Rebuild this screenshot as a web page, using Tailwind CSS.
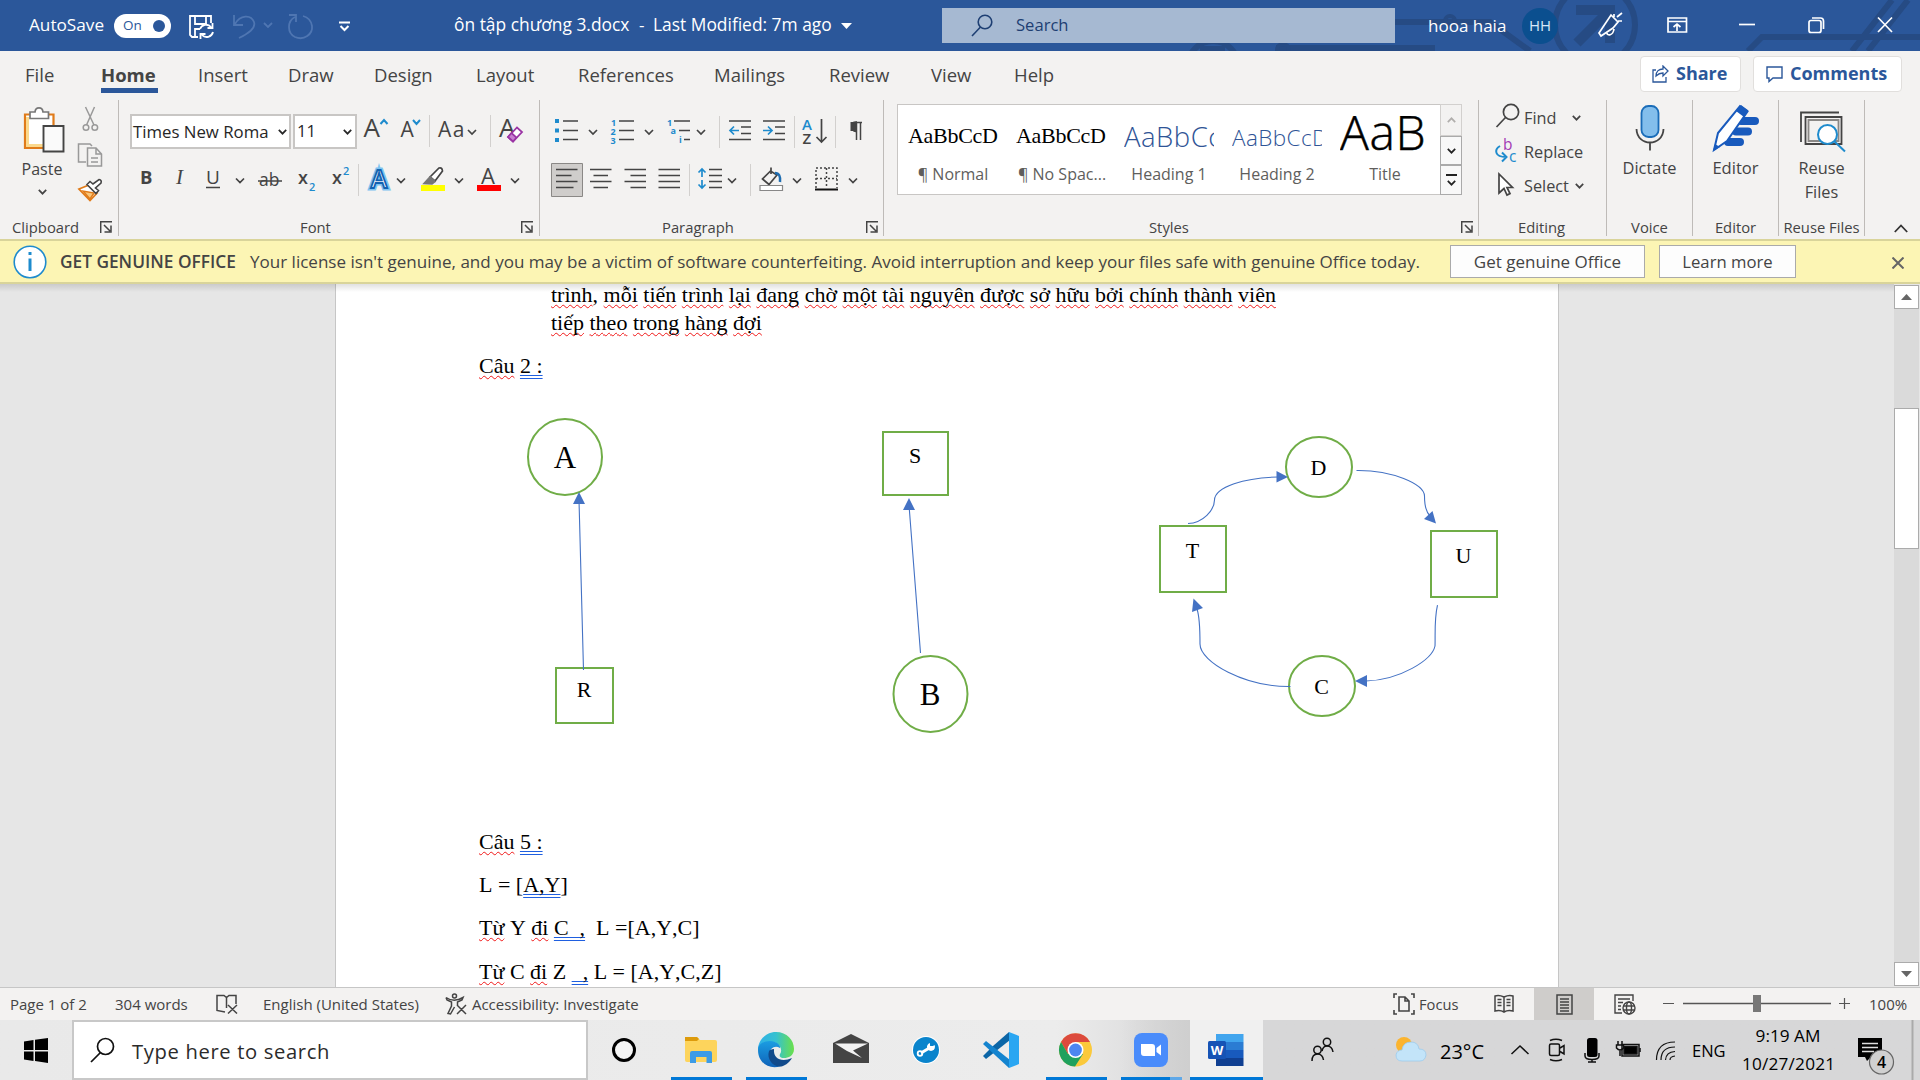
<!DOCTYPE html>
<html lang="vi">
<head>
<meta charset="utf-8">
<title>ôn tập chương 3.docx - Word</title>
<script src="https://cdn.jsdelivr.net/npm/@tailwindcss/browser@4"></script>
</head>
<body class="w-[1920px] h-[1080px] overflow-hidden bg-[#e6e6e6] font-['Open_Sans',sans-serif] text-[#444] whitespace-nowrap">
<svg class="hidden">
  <symbol id="chev" viewBox="0 0 9 6"><path d="M.8 .9L4.5 4.7L8.2 .9" fill="none" stroke="currentColor" stroke-width="1.7"/></symbol>
  <symbol id="launch" viewBox="0 0 12 12"><path d="M.7 12V.7H12M4 4L10 10M11 4.500V11H4.500" fill="none" stroke="#444" stroke-width="1.5"/></symbol>
</svg>
<div class="flex flex-col h-full">

<!-- title bar -->
<header class="h-[51px] shrink-0 bg-[#2b579a] text-white grid text-[17px]">
  <svg class="col-start-1 row-start-1 w-[1920px] h-[51px]" viewBox="0 0 1920 51" fill="none" stroke="#264b84" stroke-width="6">
    <path d="M1395 22H1490L1530 51M1276 48H1435M1748 51L1762 37H1920M1852 51L1892 0M1868 51L1908 0"/>
    <circle cx="1450" cy="21" r="5" stroke-width="4"/><circle cx="1283" cy="50" r="6" stroke-width="4"/>
    <circle cx="1595" cy="25" r="40"/><path d="M1576 10H1610V43M1608 12L1577 43" stroke-width="10"/>
    <circle cx="1213" cy="66" r="25"/><path d="M1200 49H1225"/>
  </svg>
  <div class="col-start-1 row-start-1 flex items-center">
    <span class="ml-[29px] w-[85px] text-[17.2px] leading-none pb-px">AutoSave</span>
    <span class="w-[57px] h-[24px] rounded-full bg-white text-[#2b579a] text-[13.5px] flex items-center justify-between pl-[9px] pr-[6px]">On<i class="size-3 rounded-full bg-[#2b579a]"></i></span>
    <svg class="w-[180px] h-[51px]" viewBox="171 0 180 51" fill="none" stroke="#fff" stroke-width="1.8">
      <path d="M198 37H192L190 35V16H211V23M195 16V24H206V16M195 37V29H200"/>
      <path d="M200 29A6.500 6.500 0 0 1 211 27M212.500 23V28H207.500M213 32A6.500 6.500 0 0 1 202 35M200.500 39V34H205.500"/>
      <g stroke="#4f76b2"><path d="M234 15V25H243M235 24C240 15 251 14 254 22C256 28 250 33 239 38"/><path d="M264 23L268 27L272 23"/><path d="M289 15H296V22M295 17C287 21 287 33 295 37C304 41 313 34 312 26C311 20 307 17 303 16"/></g>
      <path d="M339 22.500H350M340.500 26L344.500 30L348.500 26" stroke-width="2"/>
    </svg>
    <span class="ml-[103px] w-[185px] text-[17.4px] pb-[2px]">ôn tập chương 3.docx</span>
    <span class="w-[14px] pb-px">-</span>
    <span class="w-[188px] text-[17.4px] pb-[2px]">Last Modified: 7m ago</span>
    <svg class="w-[11px] h-[6px]" viewBox="0 0 11 6"><path d="M0 0H11L5.500 6Z" fill="#fff"/></svg>
    <div class="ml-[90px] w-[453px] h-[35px] bg-[#a6b9d2] flex items-center text-[#1e3f73]">
      <svg class="ml-[29px] w-[22px] h-[24px]" viewBox="0 0 22 24" fill="none" stroke="#1e3f73" stroke-width="1.6"><circle cx="14" cy="8" r="6.800"/><path d="M9.500 13L1 22"/></svg>
      <span class="ml-[23px] text-[16.6px]">Search</span>
    </div>
    <span class="ml-[33px] w-[94px] text-[17px]">hooa haia</span>
    <span class="size-9 rounded-full bg-[#0b4f8f] text-[15px] text-[#d8e8f8] flex items-center justify-center">HH</span>
    <svg class="w-[362px] h-[51px]" viewBox="1558 0 362 51" fill="none" stroke="#fff" stroke-width="1.7">
      <path d="M1611 15L1618 22L1613 28L1601 36L1599 33ZM1607 33C1607 36 1613 36 1614 29M1614 14V17M1617 17L1622 13M1618 21H1622"/>
      <path d="M1668 18H1686.500V32H1668ZM1668 21.500H1686.500M1677 31V24M1673.500 27L1677 24L1680.500 27"/>
      <path d="M1739 24.500H1755"/><rect x="1809" y="20.500" width="12" height="12" rx="2"/><path d="M1812 18H1820.500Q1823.500 18 1823.500 21V29"/>
      <path d="M1878 17.500L1892 32M1892 17.500L1878 32"/>
    </svg>
  </div>
</header>

<!-- ribbon tabs -->
<nav class="h-[49px] shrink-0 bg-[#f3f2f1] flex items-center pb-[2px] text-[18.5px]">
  <span class="ml-[25px] w-[76px]">File</span>
  <span class="w-[97px] font-bold text-[18.5px] relative">Home<i class="absolute left-0 -bottom-[5px] w-[57px] h-[5px] bg-[#2b579a]"></i></span>
  <span class="w-[90px]">Insert</span><span class="w-[86px]">Draw</span><span class="w-[102px]">Design</span><span class="w-[102px]">Layout</span><span class="w-[136px]">References</span><span class="w-[115px]">Mailings</span><span class="w-[102px]">Review</span><span class="w-[83px]">View</span><span class="w-[626px]">Help</span>
  <span class="w-[101px] h-[36px] -mt-[2px] bg-white border border-[#e1dfdd] rounded-sm flex items-center pl-[11px] text-[#2b579a] font-bold text-[18px]">
    <svg class="w-[17px] h-[18px] mr-[7px]" viewBox="0 0 17 18" fill="none" stroke="#2b579a" stroke-width="1.3"><path d="M4 5H1V17H14V12M4 11C4 6 7 4 11 4V1L16 6L11 11V8C8 8 6 9 4 11Z"/></svg>Share</span>
  <span class="ml-3 w-[149px] h-[36px] -mt-[2px] bg-white border border-[#e1dfdd] rounded-sm flex items-center pl-[12px] text-[#2b579a] font-bold text-[18px]">
    <svg class="w-[17px] h-[18px] mr-[7px]" viewBox="0 0 17 18" fill="none" stroke="#2b579a" stroke-width="1.4"><path d="M1 2H16V13H7L3 16.500V13H1Z"/></svg>Comments</span>
</nav>

<!-- ribbon -->
<section class="h-[139px] shrink-0 bg-[#f3f2f1] flex text-[16px]">
  <div class="w-[118px] flex flex-col">
    <div class="flex h-[118px]">
      <div class="w-[74px] flex flex-col items-center pl-[11px]">
        <svg class="w-[48px] h-[56px]" viewBox="22 100 48 56"><path d="M28 114.500H56.500V148H28Z" fill="#fff" stroke="#e07b1a" stroke-width="2.200"/><path d="M30.500 117V145.500H46" fill="none" stroke="#fbd98d" stroke-width="3"/><path d="M33 118.500V112H38C38.500 106.500 45.500 106.500 46 112H51.500V118.500Z" fill="#fff" stroke="#777" stroke-width="1.700"/><path d="M46.500 126H66.500V151.500H46.500Z" fill="#fafafa" stroke="#444" stroke-width="1.900"/></svg>
        <span class="leading-6 mt-px -ml-px">Paste</span>
        <svg class="w-[9px] h-[6px] mt-[8px] -ml-px"><use href="#chev"/></svg>
      </div>
      <svg class="w-[32px] h-[118px]" viewBox="74 100 32 118" fill="none" stroke-width="1.500">
        <g stroke="#999"><path d="M85.500 107L94 125M94.500 107L86.500 125"/><circle cx="86" cy="127.500" r="2.800"/><circle cx="94.800" cy="127.500" r="2.800"/><path d="M86 162H78.500V144H90L92 146M87.500 148H96L101.500 154V166H87.500ZM96 148V154H101.500M91 158H98M91 162H98"/></g>
        <path d="M79 189L89 185L97 193L90 200.500Z" fill="#fff" stroke="#e07b1a" stroke-width="1.800"/><path d="M83 191L90 199L94 193Z" fill="#f8c77c" stroke="#e07b1a"/><path d="M87 184.500L90 181.500L93 184L99 179.500Q102 180 101 183L95.500 188L98.500 190.500L96 193.500Z" fill="#fff" stroke="#444" stroke-width="1.600"/>
      </svg>
    </div>
    <div class="flex items-center h-[18px] text-[14.8px]"><span class="ml-3 w-[88px]">Clipboard</span><svg class="size-3"><use href="#launch"/></svg></div>
  </div>

  <div class="w-[421px] h-[136px] border-l border-[#bebbb8] flex flex-col">
    <div class="flex h-[58px] items-center pt-[5px]">
      <div class="ml-[11px] w-[161px] h-[35px] bg-white border-2 border-[#c8c6c4] flex items-center justify-between pl-px pr-[2px] text-[16.8px] text-[#262626]">Times New Roma<svg class="w-[9px] h-[6px]"><use href="#chev"/></svg></div>
      <div class="ml-[2px] w-[64px] h-[35px] bg-white border-2 border-[#c8c6c4] flex items-center justify-between pl-[2px] pr-[3px] text-[16.5px] text-[#262626]">11<svg class="w-[9px] h-[6px]"><use href="#chev"/></svg></div>
      <svg class="w-[179px] h-[50px] font-['Open_Sans',sans-serif]" viewBox="357 107 179 50" fill="none" stroke-width="1.700">
        <g fill="#444"><text x="363.500" y="137" font-size="26">A</text><text x="400.500" y="137" font-size="21">A</text><text x="438" y="137" font-size="21" letter-spacing="1.500">Aa</text><text x="499" y="137" font-size="26">A</text></g>
        <path d="M380.500 124L384 120L387.500 124M413 120L416.500 124L420 120" stroke="#1e8bcd" stroke-width="2"/>
        <path d="M429.500 115V147M490.500 115V147" stroke="#d2d0ce" stroke-width="1"/><path d="M468 130L472 134L476 130" stroke="#444"/>
        <path d="M508 137L517 127.500L522 132L513 141.500Z" fill="#fff" stroke="#9b35a5" stroke-width="1.800"/><path d="M508 137L511.500 133L516.500 137.500L513 141.500Z" fill="#c77fd0" stroke="#9b35a5"/>
      </svg>
    </div>
    <svg class="w-[420px] h-[60px]" viewBox="119 158 420 60" fill="none" stroke-width="1.700" stroke="#444">
      <g fill="#444" stroke="none" font-size="19"><text x="140" y="184" font-weight="700" font-size="18.500">B</text><text x="176" y="184" font-style="italic" font-family="Liberation Serif" font-size="21">I</text><text x="206" y="184">U</text><text x="259" y="186" font-size="17.500">ab</text><text x="298" y="184" font-size="18" font-weight="600">x</text><text x="332" y="184" font-size="18" font-weight="600">x</text><text x="481" y="184" font-size="22">A</text>
      <g fill="#1e8bcd" font-weight="600" font-size="11"><text x="309" y="191">2</text><text x="343" y="175">2</text></g></g>
      <path d="M206 187.500H220M258 181H282"/>
      <path d="M236 178.500L240 182.500L244 178.500M397 178.500L401 182.500L405 178.500M455 178.500L459 182.500L463 178.500M511 178.500L515 182.500L519 178.500"/>
      <path d="M358.500 164V196" stroke="#d2d0ce" stroke-width="1"/>
      <text x="379" y="188" font-size="25" font-weight="600" text-anchor="middle" fill="#fff" stroke="#7fc4f0" stroke-width="5" paint-order="stroke">A</text><text x="379" y="188" font-size="25" font-weight="600" text-anchor="middle" fill="#fff" stroke="#1262b0" stroke-width="1.800">A</text>
      <path d="M430 177L439 168Q442 167 442.500 171L435 181Z" fill="#fff"/><path d="M424 183.500L430 177L435 181.500L432 184Z" fill="#777" stroke="#777"/>
      <path d="M421 185H445V191H421Z" fill="#ff0" stroke="none"/><path d="M477 185H501V191H477Z" fill="#f00" stroke="none"/>
    </svg>
    <div class="flex items-center h-[18px] text-[14.8px]"><span class="ml-[181px] w-[221px]">Font</span><svg class="size-3"><use href="#launch"/></svg></div>
  </div>

  <div class="w-[344px] h-[136px] border-l border-[#bebbb8] flex flex-col">
    <svg class="w-[343px] h-[118px]" viewBox="540 100 343 118" fill="none" stroke="#444" stroke-width="1.700">
      <g fill="#1e8bcd" stroke="none"><path d="M555 119H559V123H555ZM555 128.500H559V132.500H555ZM555 138H559V142H555Z"/><g font-size="9" font-weight="700"><text x="611" y="125.500">1</text><text x="610.500" y="134.500">2</text><text x="610.500" y="143.500">3</text><text x="667" y="125.500">1</text><text x="670.500" y="134">a</text><text x="679" y="143">i</text></g></g>
      <path d="M563 121H578M563 130.500H578M563 139.500H578M619 121H634M619 130.500H634M619 139.500H634M674 121H690M679 130.500H690M684 139.500H690"/>
      <path d="M589 130L593 134L597 130M645 130L649 134L653 130M697 130L701 134L705 130M728 178.500L732 182.500L736 178.500M793 178.500L797 182.500L801 178.500M849 178.500L853 182.500L857 178.500"/>
      <path d="M719.500 116V148M794.500 116V148M835.500 116V148M689.500 164V196M750.500 164V196" stroke="#d2d0ce" stroke-width="1"/>
      <path d="M729 121H751M741 127H751M741 133.500H751M729 139.500H751M763 121H785M775 127H785M775 133.500H785M763 139.500H785"/>
      <path d="M739 130.500H730.500M734 126.500L730 130.500L734 134.500M763 130.500H771.500M768 126.500L772 130.500L768 134.500" stroke="#1e8bcd"/>
      <g stroke="none" font-size="15" font-weight="600"><text x="802" y="130" fill="#1e8bcd">A</text><text x="802.500" y="143.500" fill="#444">Z</text></g><path d="M821.500 119V142M816.500 137L821.500 142L826.500 137"/>
      <path d="M855.500 122H850.500V131H855.500Z" fill="#444" stroke="none"/><path d="M856 131.500A4.800 4.800 0 0 1 856 122Z" fill="#444"/><path d="M853 122.500H862M856.500 122V140M860.500 122V140" stroke-width="1.500"/>
      <path d="M551.500 163.500H582.500V196.500H551.500Z" fill="#cfcdcb" stroke="#8a8886" stroke-width="1"/>
      <path d="M556 169.500H577.500M556 175.500H571.500M556 181.500H577.500M556 187.500H573.500M590 169.500H611.500M593.500 175.500H608M590 181.500H611.500M593.500 187.500H608M624.500 169.500H646M630.500 175.500H646M624.500 181.500H646M630.500 187.500H646M658.500 169.500H680M658.500 175.500H680M658.500 181.500H680M658.500 187.500H680M709 169.500H722M709 175.500H722M709 181.500H722M709 187.500H722"/>
      <path d="M702 169V177M702 180V188M698.500 172.500L702 169L705.500 172.500M698.500 184.500L702 188L705.500 184.500" stroke="#1e8bcd"/>
      <path d="M771 167.500V174M770.500 171L762.500 179L769 184.500L777 175Z"/><path d="M775 173Q781 173 780 182" stroke="#1e6cb0" stroke-width="2.500"/><path d="M760 185.500H782.500V190.500H760Z" fill="#fff" stroke="#888" stroke-width="1.200"/>
      <path d="M816 188V168H837V188M816 178.500H837M826.500 168V188" stroke-dasharray="2 2" stroke-width="1.500"/><path d="M815 189.500H838" stroke="#111" stroke-width="2"/>
    </svg>
    <div class="flex items-center h-[18px] text-[14.8px]"><span class="ml-[122px] w-[204px]">Paragraph</span><svg class="size-3"><use href="#launch"/></svg></div>
  </div>

  <div class="w-[595px] h-[136px] border-l border-[#bebbb8] flex flex-col">
    <div class="h-[118px] pt-1 pl-[13px]">
      <div class="w-[565px] h-[91px] border border-[#c8c6c4] bg-white flex text-[#605e5c]">
        <div class="w-[542px] flex pl-[10px]">
          <div class="w-[108px]"><div class="h-[54px] w-[92px] overflow-hidden font-['Liberation_Serif'] text-black text-[22px] leading-[62px] tracking-[-0.3px]">AaBbCcD</div><div class="w-[90px] text-center leading-[30px]">¶ Normal</div></div>
          <div class="w-[108px]"><div class="h-[54px] w-[92px] overflow-hidden font-['Liberation_Serif'] text-black text-[22px] leading-[62px] tracking-[-0.3px]">AaBbCcD</div><div class="w-[92px] text-center leading-[30px]">¶ No Spac...</div></div>
          <div class="w-[108px]"><div class="h-[54px] w-[90px] overflow-hidden font-light text-[#2f5496] text-[27.5px] leading-[64px] tracking-[0.5px]">AaBbCc</div><div class="w-[90px] text-center leading-[30px]">Heading 1</div></div>
          <div class="w-[108px]"><div class="h-[54px] w-[90px] overflow-hidden font-light text-[#2f5496] text-[22.5px] leading-[65px] tracking-[0.4px]">AaBbCcD</div><div class="w-[90px] text-center leading-[30px]">Heading 2</div></div>
          <div class="w-[90px]"><div class="h-[43px] mt-[11px] w-[90px] overflow-hidden font-light text-black text-[48px] leading-[32px] tracking-[0.6px]"><span class="block [-webkit-text-stroke:0.5px_black]">AaB</span></div><div class="w-[90px] text-center leading-[30px]">Title</div></div>
        </div>
        <div class="w-[22px] -my-px -mr-px text-[#222] flex flex-col">
          <i class="h-[32px] border border-[#d2d0ce] bg-[#f3f2f1] text-[#b0aeac] flex items-center justify-center"><svg class="w-[9px] h-[6px] rotate-180"><use href="#chev"/></svg></i>
          <i class="h-[29px] border border-[#aaa] bg-[#f8f8f8] flex items-center justify-center"><svg class="w-[9px] h-[6px]"><use href="#chev"/></svg></i>
          <i class="h-[30px] border border-[#aaa] bg-[#f8f8f8] flex flex-col gap-1 items-center justify-center"><b class="w-[11px] h-[2px] bg-[#222]"></b><svg class="w-[9px] h-[6px]"><use href="#chev"/></svg></i>
        </div>
      </div>
    </div>
    <div class="flex items-center h-[18px] text-[14.8px]"><span class="ml-[265px] w-[312px]">Styles</span><svg class="size-3"><use href="#launch"/></svg></div>
  </div>

  <div class="w-[128px] h-[136px] border-l border-[#bebbb8] flex flex-col">
    <div class="flex h-[118px]">
      <svg class="ml-[12px] w-[33px] h-[118px]" viewBox="1491 100 33 118" fill="none" stroke="#444" stroke-width="1.700"><circle cx="1511" cy="112" r="7.600"/><path d="M1505.500 117.500L1496.500 127"/>
        <g font-size="15.500" stroke="none"><text x="1503" y="150" fill="#a33cb5">b</text><text x="1509" y="162" fill="#1e8bcd">c</text></g><path d="M1500 146Q1495 149 1496.500 153Q1498 157 1506 157M1502 152.500L1506.500 157L1502 161.500" stroke="#1e8bcd" stroke-width="2"/>
        <path d="M1499 174V193L1504 188.500L1507 195L1510 193.500L1507 187.500H1512.500Z" fill="#fff"/></svg>
      <div class="leading-[34px] text-[16.3px] pt-px"><div class="flex items-center gap-[16px]">Find<svg class="w-[9px] h-[6px]"><use href="#chev"/></svg></div><div>Replace</div><div class="flex items-center gap-[6px]">Select<svg class="w-[9px] h-[6px]"><use href="#chev"/></svg></div></div>
    </div>
    <div class="h-[18px] text-[14.8px] leading-[18px] pl-[39px]">Editing</div>
  </div>
  <div class="w-[86px] h-[136px] border-l border-[#bebbb8] flex flex-col items-center">
    <svg class="w-[84px] h-[56px]" viewBox="1608 100 84 56" fill="none" stroke="#444" stroke-width="1.800"><rect x="1641.500" y="106" width="17" height="31" rx="7" fill="#83beec" stroke="#1a6cb8"/><path d="M1636.500 129C1637 147 1663 147 1663.500 129M1650 143V150.500"/></svg>
    <span class="leading-6 h-[62px] text-[16.4px]">Dictate</span><span class="leading-[18px] text-[14.8px]">Voice</span>
  </div>
  <div class="w-[86px] h-[136px] border-l border-[#bebbb8] flex flex-col items-center">
    <svg class="w-[84px] h-[56px]" viewBox="1694 100 84 56"><path d="M1741 121H1755M1736 131.500H1748M1728 142H1740" stroke="#185abd" stroke-width="8" stroke-linecap="round"/><path d="M1714 150L1718 133L1740 106L1747.500 111.500L1727 141Z" fill="#fff" stroke="#185abd" stroke-width="2"/><path d="M1736 111L1741 105L1748.500 110.500L1744 117ZM1713 151L1715 144L1720 147Z" fill="#185abd"/></svg>
    <span class="leading-6 h-[62px] text-[16.6px]">Editor</span><span class="leading-[18px] text-[14.8px]">Editor</span>
  </div>
  <div class="w-[87px] h-[136px] border-x border-[#bebbb8] flex flex-col items-center">
    <svg class="w-[84px] h-[56px]" viewBox="1781 100 84 56" fill="none" stroke="#444" stroke-width="1.800"><path d="M1802 142V112.500H1840"/><path d="M1806.500 144V117H1842.500V144Z"/><path d="M1809.500 141V120H1839.500V141Z" stroke="#8a8886"/><circle cx="1828.500" cy="134.500" r="9.500" fill="#fff" stroke="#1e8bcd" stroke-width="2"/><path d="M1835.500 141.500L1846 151.500" stroke="#1e8bcd" stroke-width="2"/></svg>
    <span class="leading-6 h-[62px] text-[16.3px] text-center">Reuse<br>Files</span><span class="leading-[18px] text-[14.8px]">Reuse Files</span>
  </div>
  <div class="flex-1 flex items-end justify-center pb-[6px] pl-4"><svg class="w-[14px] h-[9px]" viewBox="0 0 14 9"><path d="M.8 8L7 1.500L13.200 8" fill="none" stroke="#333" stroke-width="1.800"/></svg></div>
</section>

<!-- licence notice -->
<section class="h-[45px] shrink-0 bg-[#fcf5b4] border-y-2 border-[#d9d49a] flex items-center text-[17px]">
  <svg class="ml-[13px] size-[34px]" viewBox="0 0 34 34"><circle cx="17" cy="17" r="15.800" fill="#fff" stroke="#1e8bcd" stroke-width="1.600"/><path d="M17 7V10M17 13.500V26" stroke="#1e8bcd" stroke-width="3"/></svg>
  <b class="ml-[13px] w-[190px] pt-px font-semibold text-[17.3px]">GET GENUINE OFFICE</b>
  <span class="w-[1200px] pt-px text-[17.04px]">Your license isn't genuine, and you may be a victim of software counterfeiting. Avoid interruption and keep your files safe with genuine Office today.</span>
  <span class="w-[195px] h-[33px] border border-[#aaa] bg-[#fdfdfd] flex items-center justify-center text-[17px]">Get genuine Office</span>
  <span class="ml-[14px] w-[137px] h-[33px] border border-[#aaa] bg-[#fdfdfd] flex items-center justify-center text-[16.700px]">Learn more</span>
  <svg class="ml-[96px] size-3 mt-[2px]" viewBox="0 0 12 12"><path d="M.5 .5L11.500 11.500M11.500 .5L.5 11.500" stroke="#666" stroke-width="2"/></svg>
</section>

<!-- document -->
<main class="h-[703px] shrink-0 flex bg-[#e6e6e6] overflow-hidden">
  <article class="ml-[335px] w-[1224px] h-full border-x border-[#c6c6c6] bg-white text-black font-['Liberation_Serif',serif] text-[22px] relative [text-decoration-skip-ink:none] [&_u]:decoration-wavy [&_u]:decoration-[1.2px] [&_u]:decoration-[#f01818] [&_u]:underline-offset-[2px] [&_ins]:underline [&_ins]:decoration-1 [&_ins]:decoration-[#1f5fe0] [&_ins]:underline-offset-[2px] [&_ins_span]:underline [&_ins_span]:decoration-1 [&_ins_span]:decoration-[#1f5fe0] [&_ins_span]:underline-offset-[5px]">
    <div class="absolute -left-[336px] top-0 w-[1894px] h-2 bg-linear-to-b from-black/12 to-transparent"></div>
    <div class="pl-[215px] -mt-[3px] leading-[28px]">
      <p><u>trình</u>, <u>mỗi</u> <u>tiến</u> <u>trình</u> <u>lại</u> <u>đang</u> <u>chờ</u> <u>một</u> <u>tài</u> <u>nguyên</u> <u>được</u> <u>sở</u> <u>hữu</u> <u>bởi</u> <u>chính</u> <u>thành</u> <u>viên</u></p>
      <p><u>tiếp</u> <u>theo</u> <u>trong</u> <u>hàng</u> <u>đợi</u></p>
    </div>
    <p class="pl-[143px] mt-[15px] leading-[28px]"><u>Câu</u> <ins><span>2 :</span></ins></p>
    <svg class="block w-[1222px] h-[441px]" viewBox="336 380 1222 441" font-size="22" text-anchor="middle">
      <g fill="#fff" stroke="#70ad47" stroke-width="2"><ellipse cx="565" cy="457" rx="37" ry="38"/><rect x="556" y="668" width="57" height="55"/><rect x="883" y="432" width="65" height="63"/><ellipse cx="930.500" cy="694" rx="37" ry="38"/><ellipse cx="1319" cy="467" rx="33" ry="30"/><rect x="1160" y="526" width="66" height="66"/><rect x="1431" y="531" width="66" height="66"/><ellipse cx="1322" cy="686" rx="33" ry="30"/></g>
      <g fill="none" stroke="#4472c4" stroke-width="1.100"><path d="M583.500 670L579 500M920.500 653L909 505"/><path d="M1188 523.500C1203 523 1214.500 510 1214.500 500C1215 487 1245 477.500 1278 477"/><path d="M1356.500 470.500C1392 470 1424 484 1424.500 496C1424.500 505 1426 512 1430 516"/><path d="M1437.500 605C1434 620 1435.500 635 1435 646C1432 660 1400 680 1366 681"/><path d="M1290.500 686.500C1245 687 1200 662 1200 644C1200 628 1199 615 1197 609"/></g>
      <path fill="#4472c4" d="M579 492L585 504H573ZM909 498L915 510H903ZM1288 477L1276.500 482.500V471ZM1436 523.500L1424 519L1432.500 511ZM1355 681L1367 687V675ZM1193.500 598.500L1203 608L1192 612Z"/>
      <g font-size="31"><text x="565" y="468">A</text><text x="930" y="705">B</text></g>
      <text x="584" y="697">R</text><text x="915" y="463">S</text><text x="1318.500" y="475">D</text><text x="1192.500" y="558">T</text><text x="1463.500" y="563">U</text><text x="1321.500" y="694">C</text>
    </svg>
    <div class="pl-[143px] leading-[43.2px] -mt-[1px] [font-kerning:none]">
      <p><u>Câu</u> <ins><span>5 :</span></ins></p>
      <p>L = [<ins><span>A,Y</span></ins>]</p>
      <p class="whitespace-pre"><u>Từ</u> Y <u>đi</u> <ins><span>C  ,</span></ins>  L =[A,Y,C]</p>
      <p class="whitespace-pre"><u>Từ</u> C <u>đi</u> Z <ins><span>  ,</span></ins> L = [A,Y,C,Z]</p>
    </div>
  </article>
  <aside class="ml-auto mr-px w-[25px] my-px bg-[#dadada] flex flex-col">
    <i class="h-[24px] bg-white border border-[#ababab] flex items-center justify-center"><svg class="w-[11px] h-[6px]" viewBox="0 0 11 6"><path d="M0 6H11L5.500 0Z" fill="#666"/></svg></i>
    <i class="mt-[99px] h-[141px] bg-white border border-[#ababab]"></i>
    <i class="mt-auto h-[24px] bg-white border border-[#ababab] flex items-center justify-center"><svg class="w-[11px] h-[6px]" viewBox="0 0 11 6"><path d="M0 0H11L5.500 6Z" fill="#666"/></svg></i>
  </aside>
</main>

<!-- status bar -->
<footer class="h-[33px] shrink-0 border-t border-[#c6c6c6] bg-[#f3f2f1] flex items-center text-[15px]">
  <span class="ml-[10px] w-[105px] pt-px">Page 1 of 2</span><span class="w-[101px] pt-px">304 words</span>
  <svg class="w-[22px] h-[20px]" viewBox="0 0 22 20" fill="none" stroke="#444" stroke-width="1.500"><path d="M9 18L1 16.500V1.500H8L10.500 3.500L13 1.500H20V10M10.500 3.500V14M12 11L21 19.500M21 11L12 19.500"/></svg>
  <span class="ml-[25px] w-[182px] pt-px">English (United States)</span>
  <svg class="w-[22px] h-[22px]" viewBox="0 0 22 22" fill="none" stroke="#444" stroke-width="1.500"><circle cx="9.500" cy="3" r="2"/><path d="M1 4.500Q9 10 18 4.500L17 7L12.500 9V12M1 4.500L2 7L6.500 9V13L3 20.500L5.500 21L9.500 14M12 12L21 21M21 12L12 21"/></svg>
  <span class="ml-[5px] w-[921px] pt-px tracking-[-0.03px]">Accessibility: Investigate</span>
  <svg class="w-[22px] h-[22px]" viewBox="0 0 22 22" fill="none" stroke="#444" stroke-width="1.600"><path d="M4 1H1V5M18 1H21V5M4 21H1V17M18 21H21V17M6 4H12L16 8V18H6ZM12 4V8H16"/></svg>
  <span class="ml-[4px] w-[75px] pt-px text-[14.7px]">Focus</span>
  <svg class="w-[20px] h-[20px]" viewBox="0 0 20 20" fill="none" stroke="#444" stroke-width="1.500"><path d="M10 3Q5 .5 1 2V17Q6 15.500 10 18Q14 15.500 19 17V2Q15 .5 10 3V18M3.500 5.500H7.500M3.500 8.500H7.500M3.500 11.500H7.500M12.500 5.500H16.500M12.500 8.500H16.500M12.500 11.500H16.500"/></svg>
  <span class="ml-[20px] w-[60px] h-full bg-[#cfcdcb] flex items-center justify-center"><svg class="w-[17px] h-[21px]" viewBox="0 0 17 21" fill="none" stroke="#444" stroke-width="1.500"><path d="M1 1H16V20H1ZM4 5H13M4 8H13M4 11H13M4 14H13M4 17H13"/></svg></span>
  <svg class="ml-[20px] w-[22px] h-[21px]" viewBox="0 0 22 21" fill="none" stroke="#444" stroke-width="1.400"><path d="M8 19H1V1H19V7M4 5H16M4 8.500H9M4 12H7M4 15.500H7"/><circle cx="15" cy="14" r="6"/><ellipse cx="15" cy="14" rx="2.500" ry="6"/><path d="M9 12H21M9 16H21"/></svg>
  <svg class="w-[230px] h-[30px]" viewBox="1636 989 230 30" stroke="#555"><path d="M1663 1003.500H1674M1839 1003.500H1850M1844.500 998V1009" stroke-width="1.200"/><path d="M1683 1003.500H1831" stroke-width="1.600"/><path d="M1757 995V1012" stroke="#777" stroke-width="8"/></svg>
  <span class="ml-[3px] pt-px">100%</span>
</footer>

<!-- taskbar -->
<footer class="h-[60px] shrink-0 bg-linear-to-r from-[#e9e9e9] from-0% via-[#ececec] via-55% to-[#d7d7d8] to-62% flex text-black">
  <svg class="w-[72px] h-[60px]" viewBox="0 1020 72 60"><path d="M24 1041.500L33.500 1040V1050H24ZM35 1039.700L48 1038V1050H35ZM24 1051.500H33.500V1061L24 1059.500ZM35 1051.500H48V1063L35 1061Z"/></svg>
  <div class="w-[516px] h-[60px] bg-white border-2 border-[#c8c8c8] flex items-center text-[20.2px] text-[#2b2b2b]">
    <svg class="ml-[16px] w-[25px] h-[26px]" viewBox="0 0 25 26" fill="none" stroke="#111" stroke-width="1.700"><circle cx="15.500" cy="9.500" r="8"/><path d="M10.500 15.500L1 25"/></svg><span class="ml-[17px] pt-[3px] tracking-[0.65px]">Type here to search</span></div>
  <svg class="w-[83px] h-[60px]" viewBox="588 1020 83 60"><ellipse cx="624" cy="1050" rx="10.500" ry="10.500" fill="#f4f4f4" stroke="#000" stroke-width="3"/></svg>
  <svg class="w-[75px] h-[60px]" viewBox="671 1020 75 60"><path d="M685 1037H697L700 1040H715Q717 1040 717 1042V1060Q717 1062 715 1062H687Q685 1062 685 1060Z" fill="#fdd45c"/><path d="M685 1037H697L699 1039L697 1041H685Z" fill="#dd9b0c"/><path d="M690 1063V1053Q690 1051 692 1051H710Q712 1051 712 1053V1063H706.500V1057H696V1063Z" fill="#3c9be6"/><path d="M671 1077H732V1080H671Z" fill="#0078d7"/></svg>
  <svg class="w-[80px] h-[60px]" viewBox="746 1020 80 60">
    <defs><linearGradient id="eg" x1="0" x2="1"><stop offset="0" stop-color="#2fb0e8"/><stop offset=".5" stop-color="#35c1d0"/><stop offset="1" stop-color="#6be04a"/></linearGradient><linearGradient id="eb" x1="0" y1="0" x2="0" y2="1"><stop offset="0" stop-color="#1b9de2"/><stop offset="1" stop-color="#0f62b8"/></linearGradient></defs>
    <path d="M758 1050C758 1040 766 1032 776 1032C787 1032 794 1040 794 1049C794 1056 788 1058 784 1058C780 1058 779 1056 780 1054C783 1050 780 1042 771 1042C764 1042 759 1046 758 1050Z" fill="url(#eg)"/><path d="M758 1050C758 1044 764 1041 770 1041C777 1041 781 1046 780 1048C774 1044 768 1050 770 1056C772 1062 780 1066 786 1063C775 1072 758 1066 758 1050Z" fill="url(#eb)"/><path d="M769 1051C766 1060 775 1069 783 1066C788 1064 791 1060 792 1058C783 1062 773 1060 774 1049C771 1049 770 1050 769 1051Z" fill="#114a8b"/><path d="M746 1077H807V1080H746Z" fill="#0078d7"/></svg>
  <svg class="w-[80px] h-[60px]" viewBox="826 1020 80 60"><path d="M833 1043L851 1034L869 1043V1063H833Z" fill="#444"/><path d="M835 1043.500H868L853 1050.500L862 1058L847 1051Z" fill="#f2f2f2"/></svg>
  <svg class="w-[70px] h-[60px]" viewBox="906 1020 70 60"><circle cx="926" cy="1050" r="14" fill="#fff"/><circle cx="926" cy="1050" r="13" fill="#0a84cc"/><path d="M921 1053L931 1047" stroke="#fff" stroke-width="3"/><circle cx="920" cy="1053.500" r="2.300" fill="none" stroke="#fff" stroke-width="1.800"/><path d="M934.500 1045A4 4 0 1 1 930 1043L930 1046H933Z" fill="#fff"/></svg>
  <svg class="w-[70px] h-[60px]" viewBox="976 1020 70 60"><path d="M983 1056L986 1059L1010 1040L1009 1032L993 1046Z" fill="#0b65a6"/><path d="M983 1044L986 1041L1010 1060L1009 1068Z" fill="#1484cf"/><path d="M1009 1032L1019 1036V1064L1009 1068Z" fill="#2aa6f2"/></svg>
  <svg class="w-[75px] h-[60px]" viewBox="1046 1020 75 60"><circle cx="1075.500" cy="1050" r="16.500" fill="#fbc93b"/><path d="M1061 1042A16.500 16.500 0 0 1 1090 1042H1075.500L1068 1054Z" fill="#dc4a3d"/><path d="M1061 1042A16.500 16.500 0 0 0 1075 1066.500L1083 1054H1068Z" fill="#1fa15d"/><circle cx="1075.500" cy="1050" r="8" fill="#fff"/><circle cx="1075.500" cy="1050" r="6.400" fill="#4c86f0"/><path d="M1046 1077H1107V1080H1046Z" fill="#0078d7"/></svg>
  <svg class="w-[69px] h-[60px] bg-linear-to-r from-transparent to-[#cfcfcf]" viewBox="1121 1020 69 60"><rect x="1134" y="1033" width="34" height="34" rx="8" fill="#4a8cfb"/><path d="M1141 1044H1152Q1155 1044 1155 1047V1056H1144Q1141 1056 1141 1053ZM1156.500 1048L1161 1044.500V1055.500L1156.500 1052Z" fill="#fff"/><path d="M1121 1077H1170V1080H1121Z" fill="#0078d7"/><path d="M1170 1077H1182V1080H1170Z" fill="#5fa8e8"/></svg>
  <svg class="w-[73px] h-[60px] bg-[#f0f0f0]" viewBox="1190 1020 73 60"><path d="M1216 1034H1243.500V1042H1216Z" fill="#41a5ee"/><path d="M1216 1042H1243.500V1050H1216Z" fill="#2b7cd3"/><path d="M1216 1050H1243.500V1058H1216Z" fill="#185abd"/><path d="M1216 1058H1243.500V1066H1216Z" fill="#103f91"/><rect x="1208" y="1041" width="18" height="18" rx="1.500" fill="#1653b5"/><text x="1217" y="1055" font-size="13" font-weight="700" fill="#fff" text-anchor="middle">W</text><path d="M1190 1077H1263V1080H1190Z" fill="#0078d7"/></svg>
  <svg class="w-[177px] h-[60px]" viewBox="1263 1020 177 60" fill="none" stroke="#111" stroke-width="1.500"><circle cx="1327" cy="1042" r="3.700"/><path d="M1322 1051Q1323 1046 1327 1046Q1332 1046 1333 1052"/><circle cx="1317.500" cy="1050" r="3.700"/><path d="M1312 1061Q1312 1054 1317.500 1054Q1322.500 1054 1323.500 1060"/><circle cx="1404" cy="1045" r="8" fill="#fbb42f" stroke="none"/><path d="M1402 1061Q1396 1061 1396 1055Q1397 1050 1402 1050Q1403 1042 1411 1042Q1418 1042 1419 1049Q1426 1049 1426 1055Q1425 1061 1420 1061Z" fill="#c3e4f9" stroke="#9ccbee" stroke-width=".8"/></svg>
  <span class="w-[62px] text-[20px] leading-[64px]">23°C</span>
  <svg class="w-[190px] h-[60px]" viewBox="1502 1020 190 60" fill="none" stroke="#111" stroke-width="1.500"><path d="M1511.500 1054L1520 1046L1528.500 1054"/><rect x="1549.500" y="1044" width="10" height="11.500" rx="1.500"/><path d="M1560 1048L1564 1045.500V1054L1560 1051.500M1550 1040.500Q1556 1038 1562 1040.500M1550 1059.500Q1556 1062 1562 1059.500"/><rect x="1587" y="1038" width="10.500" height="19" rx="2.500" fill="#000" stroke="none"/><path d="M1585 1053V1056Q1585 1059.500 1592 1059.500Q1599 1059.500 1599 1056V1053M1592 1059V1062M1588 1062H1596"/><path d="M1622 1044.500H1639V1056H1622Z"/><path d="M1624 1046.500H1637V1054H1624Z" fill="#000"/><path d="M1640 1048V1052M1618 1041V1045M1622 1041V1045M1616.500 1045H1623.500V1048Q1620 1052 1616.500 1048ZM1620 1050V1056"/><path d="M1656.500 1060Q1656.500 1042 1675 1042M1661 1060Q1661 1047 1675 1047M1665.500 1060Q1666 1052 1675 1051.500M1670 1060Q1670 1056.500 1675 1056" stroke-width="1.200"/></svg>
  <span class="w-[50px] text-[16.5px] leading-[61px]">ENG</span>
  <div class="w-[92px] text-center text-[17.2px] leading-[28px] pt-[2px]">9:19 AM<br><span class="tracking-[0.2px]">10/27/2021</span></div>
  <svg class="w-[86px] h-[60px]" viewBox="1834 1020 86 60"><path d="M1858 1038H1882V1057H1871L1867 1061L1865 1057H1858Z"/><path d="M1862 1043.500H1878M1862 1047.500H1878M1862 1051.500H1874" stroke="#ddd" stroke-width="1.400"/><circle cx="1881.500" cy="1062" r="12" fill="#d0d0d0" stroke="#666" stroke-width="1.200"/><text x="1881.500" y="1068" font-size="16" font-weight="600" text-anchor="middle">4</text><path d="M1912.500 1020V1080" stroke="#aaa" stroke-width="2"/></svg>
</footer>
</div>
</body>
</html>
